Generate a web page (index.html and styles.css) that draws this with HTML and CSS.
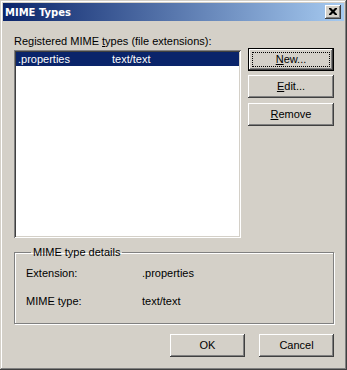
FILE: index.html
```html
<!DOCTYPE html>
<html>
<head>
<meta charset="utf-8">
<link rel="stylesheet" href="styles.css">
</head>
<body>
<div class="window">
  <div class="titlebar">
    <span class="title">MIME Types</span>
    <span class="close-btn">
      <svg width="8" height="7" viewBox="0 0 8 7"><path d="M0 0h2l2 2 2-2h2v1l-2.5 2.5L8 6v1H6L4 5 2 7H0V6l2.5-2.5L0 1z" fill="#000"/></svg>
    </span>
  </div>
  <div class="content">
    <div class="top-row">
      <div class="list-col">
        <div class="label">Registered MIME <u>t</u>ypes (file extensions):</div>
        <div class="listbox">
          <div class="row selected"><span class="c1">.properties</span><span class="c2">text/text</span></div>
        </div>
      </div>
      <div class="btn-col">
        <div class="btn default"><u>N</u>ew...</div>
        <div class="btn"><u>E</u>dit...</div>
        <div class="btn remove"><u>R</u>emove</div>
      </div>
    </div>
    <fieldset class="group">
      <legend>MIME type details</legend>
      <div class="details">
        <span>Extension:</span><span>.properties</span>
        <span>MIME type:</span><span>text/text</span>
      </div>
    </fieldset>
    <div class="footer">
      <div class="btn small">OK</div>
      <div class="btn small">Cancel</div>
    </div>
  </div>
</div>
</body>
</html>
```
FILE: styles.css
```css
html, body {
  margin: 0;
  padding: 0;
  background: #D4D0C8;
}
body {
  font-family: "Liberation Sans", Arial, sans-serif;
  font-size: 11px;
  line-height: 13px;
  color: #000;
}
.window {
  width: 347px;
  height: 370px;
  box-sizing: border-box;
  padding: 3px;
  background: #D4D0C8;
  box-shadow: inset -1px -1px #404040, inset 1px 1px #D4D0C8, inset -2px -2px #808080, inset 2px 2px #FFFFFF;
  display: flex;
  flex-direction: column;
}
.titlebar {
  height: 18px;
  background: linear-gradient(90deg, #0A246A, #A6CAF0);
  display: flex;
  align-items: center;
  justify-content: space-between;
  padding: 0 3px 0 2px;
}
.title {
  color: #fff;
  font-family: "DejaVu Sans", Verdana, sans-serif;
  font-weight: bold;
  font-size: 10px;
}
.close-btn {
  width: 16px;
  height: 14px;
  box-sizing: border-box;
  background: #D4D0C8;
  box-shadow: inset -1px -1px #404040, inset 1px 1px #FFFFFF, inset -2px -2px #808080, inset 2px 2px #D4D0C8;
  display: flex;
  align-items: center;
  justify-content: center;
  padding: 0 1px 1px 0;
}
.close-btn svg { display: block; }
.content {
  flex: 1;
  padding: 14px 10px 0 11px;
  display: flex;
  flex-direction: column;
}
.top-row {
  display: flex;
  gap: 7px;
}
.list-col {
  width: 227px;
}
.label {
  height: 13px;
  margin-bottom: 2px;
}
.listbox {
  height: 188px;
  box-sizing: border-box;
  background: #fff;
  padding: 2px;
  box-shadow: inset 1px 1px #808080, inset -1px -1px #FFFFFF, inset 2px 2px #404040, inset -2px -2px #D4D0C8;
}
.row {
  height: 14px;
  display: flex;
  align-items: center;
  padding-left: 2px;
}
.row.selected {
  background: #0A246A;
  color: #fff;
}
.c1 { width: 94px; }
.btn-col {
  flex: 1;
  display: flex;
  flex-direction: column;
  gap: 4px;
  padding-top: 13px;
}
.btn {
  height: 23px;
  box-sizing: border-box;
  background: #D4D0C8;
  box-shadow: inset -1px -1px #404040, inset 1px 1px #FFFFFF, inset -2px -2px #808080, inset 2px 2px #D4D0C8;
  display: flex;
  align-items: center;
  justify-content: center;
  padding-bottom: 1px;
}
.btn.default {
  box-shadow: inset 0 0 0 1px #000, inset -2px -2px #404040, inset 2px 2px #FFFFFF, inset -3px -3px #808080, inset 3px 3px #D4D0C8;
  outline: 1px dotted #000;
  outline-offset: -5px;
}
.btn.remove { margin-top: 1px; }
.group {
  margin: 8px 0 0 0;
  padding: 8px 11px 15px 11px;
  border: 1px solid #808080;
  box-shadow: inset 1px 1px #FFFFFF, 1px 1px #FFFFFF;
  min-width: 0;
}
.group legend {
  padding: 0 2px;
  margin-left: 5px;
  line-height: 13px;
}
.details {
  display: grid;
  grid-template-columns: 116px 1fr;
  row-gap: 15px;
}
.footer {
  display: flex;
  justify-content: flex-end;
  gap: 14px;
  margin-top: 10px;
}
.btn.small {
  width: 75px;
}
```
